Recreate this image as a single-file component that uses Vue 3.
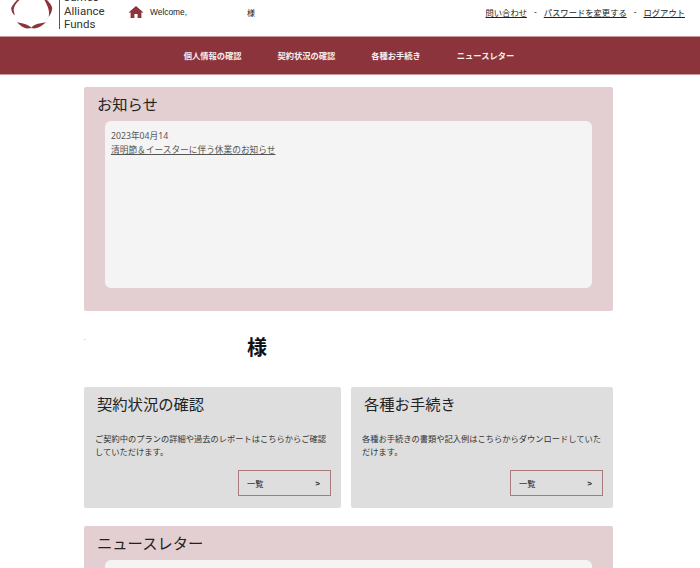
<script setup>
const navItems = ['個人情報の確認', '契約状況の確認', '各種お手続き', 'ニュースレター']

const cards = [
  {
    title: '契約状況の確認',
    text: 'ご契約中のプランの詳細や過去のレポートはこちらからご確認していただけます。'
  },
  {
    title: '各種お手続き',
    text: '各種お手続きの書類や記入例はこちらからダウンロードしていただけます。'
  }
]
</script>

<template>
  <div class="page">
    <header class="top">
      <div class="brand">
        <svg class="logo" width="42" height="30" viewBox="11 0 42 30">
          <path d="M17 0 L19.5 0 C16 3 14 6 13.6 10 L14.8 15.5 C12.5 13.5 11.2 11 11.2 8 C12.5 5 15 2 17 0 Z" fill="#8b343b" />
          <path d="M44.5 0 L47 0 C49.5 2.5 51.5 5 52.2 8 C52 11.5 50.5 14.5 48.6 17 C49.2 14 49.2 11.5 48.4 9 C47.6 6 46 3 44.5 0 Z" fill="#8b343b" />
          <path d="M17 22.2 L22 23.2 C26 24 29 25.5 31.8 28 L27 28.4 C23.5 28 20 25.5 17 22.2 Z" fill="#8b343b" />
          <path d="M46 22.2 C42.5 25.5 38.5 28 34.5 28.4 L31 28 C32 26.5 35 24.5 38 23.8 Z" fill="#8b343b" />
        </svg>
        <div class="brand-name">
          <span class="clipped">James</span>
          <span>Alliance</span>
          <span>Funds</span>
        </div>
      </div>
      <div class="welcome">
        <svg class="home" width="16" height="14" viewBox="0 0 16 14">
          <path d="M8 1 L15.5 7.5 L13.4 7.5 L13.4 13 L9.6 13 L9.6 9 L6.4 9 L6.4 13 L2.6 13 L2.6 7.5 L0.5 7.5 Z" fill="#8b343b" />
        </svg>
        <span class="welcome-label">Welcome,</span>
        <span class="welcome-sama">様</span>
      </div>
      <nav class="links">
        <a>問い合わせ</a>
        <span>-</span>
        <a>パスワードを変更する</a>
        <span>-</span>
        <a>ログアウト</a>
      </nav>
    </header>

    <nav class="mainnav">
      <a v-for="item in navItems" :key="item">{{ item }}</a>
    </nav>

    <main class="content">
      <section class="panel notice">
        <h2>お知らせ</h2>
        <div class="panel-inner">
          <p class="date">2023年04月14</p>
          <a class="news-link">清明節＆イースターに伴う休業のお知らせ</a>
        </div>
      </section>

      <div class="customer">
        <span class="dot">.</span>
        <span class="customer-name">様</span>
      </div>

      <div class="cards">
        <section v-for="card in cards" :key="card.title" class="card">
          <h2>{{ card.title }}</h2>
          <p>{{ card.text }}</p>
          <div class="card-foot">
            <a class="more"><span>一覧</span><b>&gt;</b></a>
          </div>
        </section>
      </div>

      <section class="panel newsletter">
        <h2>ニュースレター</h2>
        <div class="panel-inner"></div>
      </section>
    </main>
  </div>
</template>

<style scoped>
.page {
  width: 700px;
  height: 568px;
  overflow: hidden;
  background: #fff;
  color: #222;
  font-family: "Liberation Sans", "Noto Sans CJK JP", sans-serif;
}

.top {
  height: 36px;
  display: flex;
  align-items: flex-start;
}

.brand {
  display: flex;
  width: 128px;
  height: 36px;
  overflow: hidden;
  padding-left: 11px;
  box-sizing: border-box;
}

.logo {
  flex: none;
}

.brand-name {
  margin-left: 6px;
  padding-left: 4px;
  height: 29px;
  border-left: 1px solid #555;
  display: flex;
  flex-direction: column;
  font-family: Roboto, sans-serif;
  font-size: 11.5px;
  line-height: 13.5px;
  color: #333;
  box-sizing: border-box;
}

.clipped {
  margin-top: -9px;
}

.welcome {
  display: flex;
  align-items: center;
  height: 24px;
  font-size: 8.4px;
  color: #222;
}

.home {
  margin-right: 6px;
}

.welcome-sama {
  margin-left: 60px;
  font-size: 8px;
}

.links {
  margin-left: auto;
  margin-right: 15px;
  height: 24px;
  display: flex;
  align-items: center;
  gap: 7px;
  font-size: 8.3px;
}

.links a {
  text-decoration: underline;
}

.mainnav {
  height: 36px;
  padding-bottom: 1px;
  background: #8b343b;
  border-top: 1px solid #c99a9d;
  border-bottom: 1px solid #c99a9d;
  display: flex;
  justify-content: center;
  align-items: center;
  gap: 36px;
  color: #f6eeee;
  font-size: 8.25px;
  font-weight: 700;
  padding-right: 2px;
}

.content {
  width: 529px;
  margin-left: 84px;
  padding-top: 12px;
}

.panel {
  background: #e3cfd1;
  border-radius: 2px;
  padding: 6px 21px 23px;
}

.panel h2,
.card h2 {
  margin: 0;
  font-size: 15.3px;
  font-weight: 400;
  line-height: 23px;
  color: #222;
}

.panel h2 {
  margin-left: -8px;
}

.panel-inner {
  margin-top: 5px;
  height: 167px;
  box-sizing: border-box;
  padding: 8px 6px;
  background: #f4f4f4;
  border-radius: 6px;
  font-family: "Noto Sans", "Noto Sans CJK JP", sans-serif;
  font-size: 8.7px;
  line-height: 14px;
  color: #555;
}

.date {
  margin: 0;
}

.news-link {
  text-decoration: underline;
}

.customer {
  height: 76px;
  position: relative;
  display: flex;
  align-items: center;
}

.customer-name {
  margin-left: 163px;
  margin-top: -6px;
  font-size: 20px;
  font-weight: 700;
  color: #111;
}

.dot {
  position: absolute;
  left: 0;
  top: 24px;
  font-size: 6px;
}

.cards {
  display: grid;
  grid-template-columns: 257px 1fr;
  gap: 10px;
}

.card {
  height: 121px;
  box-sizing: border-box;
  padding: 6px 10px 0 11px;
  background: #dedede;
  border-radius: 2px;
}

.card h2 {
  margin-left: 2px;
}

.card p {
  margin: 17px 0 0;
  font-size: 8.25px;
  line-height: 13px;
  color: #333;
}

.card-foot {
  display: flex;
  justify-content: flex-end;
  margin-top: 11px;
}

.more {
  width: 93px;
  height: 26px;
  box-sizing: border-box;
  border: 1px solid #a8797d;
  display: flex;
  align-items: center;
  justify-content: space-between;
  padding: 0 10px 0 8px;
  font-size: 8.25px;
}

.more b {
  font-size: 8px;
}

.newsletter {
  margin-top: 18px;
}
</style>

<style>
html, body {
  margin: 0;
  overflow: hidden;
}
</style>
